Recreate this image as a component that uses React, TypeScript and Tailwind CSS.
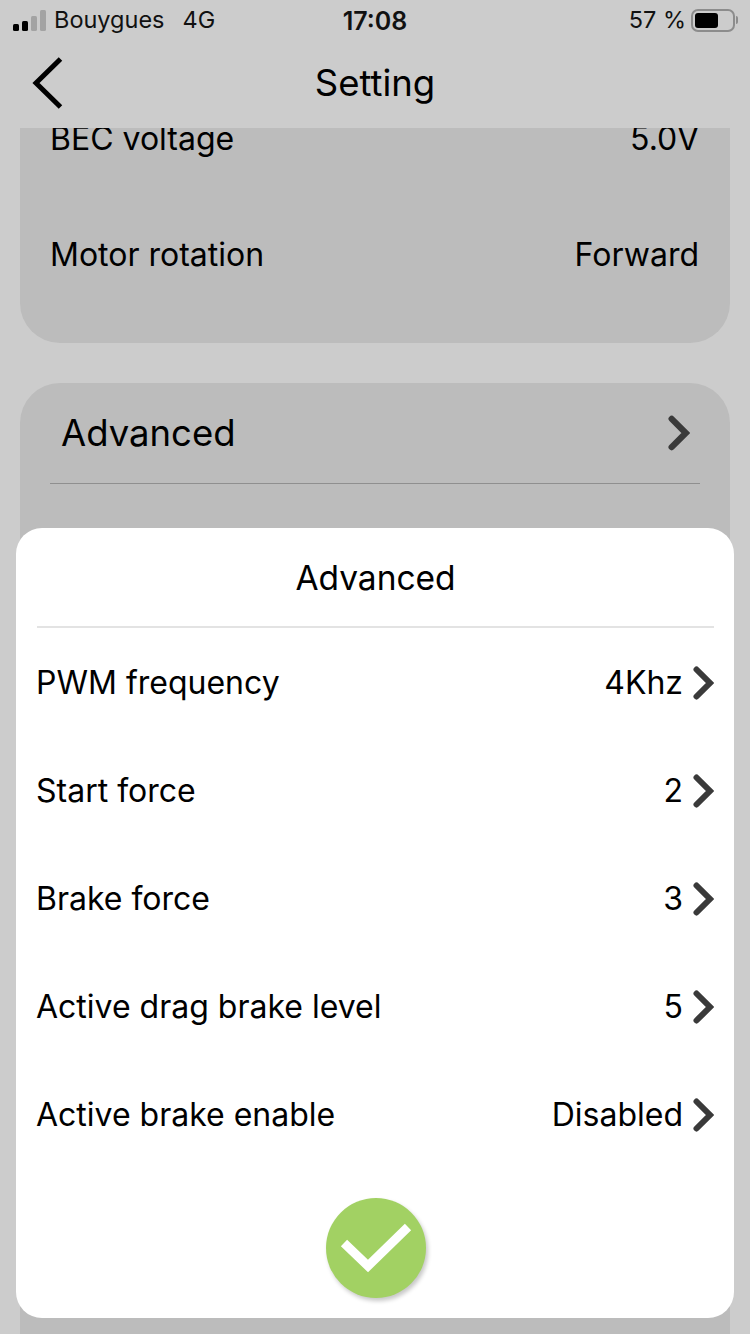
const sans = { fontFamily: '"Inter", "Liberation Sans", sans-serif' }

function Chevron({ className }: { className: string }) {
  return (
    <svg className={className} viewBox="0 0 21 34" fill="none">
      <path d="M3.5 3.5L17 17L3.5 30.5" stroke="#3a3a3a" strokeWidth="6" strokeLinecap="round" />
    </svg>
  )
}

function StatusBar() {
  return (
    <div className="relative flex h-10 items-center pl-[13px] pr-[12px] text-[23.5px] text-[#111]">
      <div className="flex h-[22px] items-end gap-[3px]">
        <span className="h-[7px] w-[6px] rounded-[1.5px] bg-black" />
        <span className="h-[10px] w-[6px] rounded-[1.5px] bg-black" />
        <span className="h-[15px] w-[6px] rounded-[1.5px] bg-[#a3a3a3]" />
        <span className="h-[21px] w-[6px] rounded-[1.5px] bg-[#a3a3a3]" />
      </div>
      <span className="ml-[8px]">Bouygues</span>
      <span className="ml-[18px]">4G</span>
      <span className="flex-1" />
      <span>57 %</span>
      <div className="ml-[5px] flex items-center">
        <div className="h-[23px] w-[44px] rounded-[7px] border-2 border-[#8c8c8c] p-[2px]">
          <div className="h-full w-[23px] rounded-[3px] bg-black" />
        </div>
        <div className="ml-[1px] h-[8px] w-[2px] rounded-r-full bg-[#8c8c8c]" />
      </div>
      <span className="absolute inset-x-0 top-[6px] text-center text-[25px] leading-[30px] font-semibold">17:08</span>
    </div>
  )
}

function AdvancedRow({ label, value }: { label: string; value: string }) {
  return (
    <div className="flex h-[108px] items-center justify-between text-[32px]">
      <span className="-ml-px">{label}</span>
      <div className="flex items-center gap-[10px]">
        <span>{value}</span>
        <Chevron className="h-[34px] w-[21px]" />
      </div>
    </div>
  )
}

export default function App() {
  return (
    <div className="relative h-[1334px] w-[750px] overflow-hidden bg-[#cccccc] text-black" style={sans}>
      <StatusBar />
      <div className="relative flex h-[88px] items-center justify-center">
        <svg className="absolute left-[32px] top-[17px] h-[52px] w-[32px]" viewBox="0 0 32 52" fill="none">
          <path d="M28.5 2L4 26L28.5 50" stroke="#000" strokeWidth="5" />
        </svg>
        <span className="-mt-[2px] text-[36.5px] leading-none">Setting</span>
      </div>

      <div className="mx-5 h-[215px] overflow-hidden rounded-b-[40px] bg-[#bcbcbc] pl-[30px] pr-[31px] text-[32px]">
        <div className="-mt-[5px] flex justify-between leading-none">
          <span>BEC voltage</span>
          <span>5.0V</span>
        </div>
        <div className="mt-[84px] flex justify-between leading-none">
          <span>Motor rotation</span>
          <span>Forward</span>
        </div>
      </div>

      <div className="mx-5 mt-10 h-[951px] rounded-t-[40px] bg-[#bcbcbc] px-[30px]">
        <div className="flex h-[101px] items-center justify-between border-b border-[#8f8f8f] pl-[11px] pr-[10px] text-[36.5px]">
          <span>Advanced</span>
          <Chevron className="h-[36px] w-[22px]" />
        </div>
      </div>

      <div className="absolute left-4 top-[528px] h-[790px] w-[718px] rounded-[26px] bg-white pl-[21px] pr-[20px]">
        <div className="flex h-[100px] items-center justify-center border-b-2 border-[#e3e3e3] pt-[3px] text-[33.5px]">
          Advanced
        </div>
        <div className="pt-[1px]">
          <AdvancedRow label="PWM frequency" value="4Khz" />
          <AdvancedRow label="Start force" value="2" />
          <AdvancedRow label="Brake force" value="3" />
          <AdvancedRow label="Active drag brake level" value="5" />
          <AdvancedRow label="Active brake enable" value="Disabled" />
        </div>
        <div className="mt-[29px] flex justify-center">
          <div className="flex h-[100px] w-[100px] items-center justify-center rounded-full bg-[#a2d163] shadow-[2px_3px_4px_rgba(0,0,0,0.22)]">
            <svg className="h-[52px] w-[72px]" viewBox="0 0 72 52" fill="none">
              <path d="M4 21L28 44L68 5" stroke="#fff" strokeWidth="9" />
            </svg>
          </div>
        </div>
      </div>
    </div>
  )
}
